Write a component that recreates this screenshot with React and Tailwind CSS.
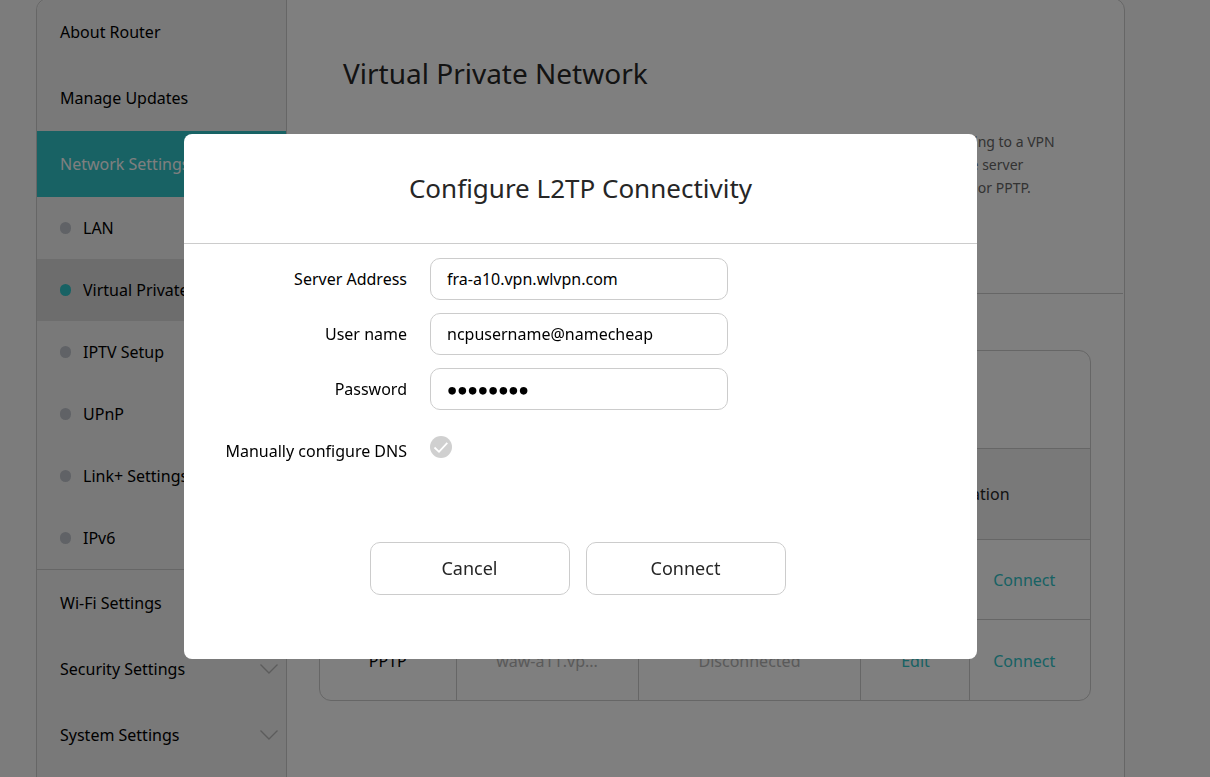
import React, { useState } from 'react';

const subItems = [
    { label: 'LAN' },
    { label: 'Virtual Private Network', active: true },
    { label: 'IPTV Setup' },
    { label: 'UPnP' },
    { label: 'Link+ Settings' },
    { label: 'IPv6' }
];

const connections = [
    { type: 'L2TP', server: 'fra-a10.vp...', status: 'Disconnected' },
    { type: 'PPTP', server: 'waw-a11.vp...', status: 'Disconnected' }
];

export default function App() {
    const [open, setOpen] = useState(true);

    return (
        <div className="h-screen overflow-hidden bg-[#f9f9f9] pr-[49px] font-['Noto_Sans',sans-serif] text-base text-black">
            <div className="mx-9 -mt-0.5 flex min-h-[calc(100vh+40px)] rounded-xl border border-[#ccc] bg-white">
                <Sidebar />
                <VpnPage onConnect={() => setOpen(true)} />
            </div>
            {open && <ConfigureDialog onClose={() => setOpen(false)} />}
        </div>
    );
}

function Sidebar() {
    return (
        <nav className="w-[250px] shrink-0 rounded-l-xl border-r border-[#ccc] bg-[#f3f3f3]">
            <MenuItem label="About Router" />
            <MenuItem label="Manage Updates" />
            <MenuItem label="Network Settings" active />
            <ul className="border-b border-[#ccc]">
                {subItems.map(item => (
                    <li key={item.label}>
                        <a
                            href="#"
                            className={`flex h-[62px] items-center gap-3 pl-[23px] whitespace-nowrap ${item.active ? 'bg-[#dbdbdb]' : ''}`}
                        >
                            <span className={`h-3 w-[11px] shrink-0 rounded-full ${item.active ? 'bg-[#30c4c8]' : 'bg-[#c0c4cc]'}`} />
                            <span className="overflow-hidden text-ellipsis">{item.label}</span>
                        </a>
                    </li>
                ))}
            </ul>
            <MenuItem label="Wi-Fi Settings" />
            <MenuItem label="Security Settings" arrow />
            <MenuItem label="System Settings" arrow />
        </nav>
    );
}

function MenuItem({ label, active, arrow }) {
    return (
        <a
            href="#"
            className={`flex h-[66px] items-center justify-between pr-2 pl-[23px] ${active ? 'bg-[#30c4c8] text-white' : ''}`}
        >
            {label}
            {arrow && (
                <svg className="h-[10px] w-[18px]" viewBox="0 0 18 10" fill="none" stroke="#b8b8b8" strokeWidth="1.4">
                    <path d="M0.5 0.5 L9 9 L17.5 0.5" />
                </svg>
            )}
        </a>
    );
}

function VpnPage({ onConnect }) {
    return (
        <main className="min-w-0 grow">
            <section className="mr-px h-[295px] border-b border-[#ccc] px-14 pt-[53px]">
                <h1 className="text-[28px] leading-[42px] text-[#262626]">Virtual Private Network</h1>
                <p className="mt-9 text-sm leading-[23px] whitespace-nowrap text-[#666]">
                    A virtual private network keeps the traffic of all your connected home devices private by connecting to a VPN<br />
                    server. Before you start, make sure that you have both the address and the account details of the server<br />
                    which you want to use. The router can reach the server with one of two different protocols, L2TP or PPTP.
                </p>
            </section>

            {/* Connection list */}
            <div className="mr-[33px] ml-8 mt-14 overflow-hidden rounded-xl border border-[#ccc]">
                <h2 className="flex h-[98px] items-center border-b border-[#ccc] px-6">VPN Connections</h2>
                <table className="w-full table-fixed text-center">
                    <colgroup>
                        <col className="w-[136px]" />
                        <col className="w-[182px]" />
                        <col />
                        <col className="w-[109px]" />
                        <col className="w-[120px]" />
                    </colgroup>
                    <thead>
                        <tr className="h-[90px] border-b border-[#ccc] bg-[#f3f3f3] text-[#262626]">
                            <th className="font-normal">Type</th>
                            <th className="font-normal">Server</th>
                            <th className="font-normal">Status</th>
                            <th className="pr-2 font-normal" colSpan={2}>Operation</th>
                        </tr>
                    </thead>
                    <tbody className="divide-y divide-[#ccc]">
                        {connections.map(item => (
                            <tr key={item.type} className="h-20 divide-x divide-[#ccc] last:h-[81px]">
                                <td className="pt-0.5">{item.type}</td>
                                <td className="pt-0.5 text-[#b4b4b4]">{item.server}</td>
                                <td className="pt-0.5 text-[#b4b4b4]">{item.status}</td>
                                <td className="pt-0.5"><button className="text-[#30c4c8]">Edit</button></td>
                                <td className="pt-0.5"><button className="pr-3 text-[#30c4c8]" onClick={onConnect}>Connect</button></td>
                            </tr>
                        ))}
                    </tbody>
                </table>
            </div>
        </main>
    );
}

function ConfigureDialog({ onClose }) {
    return (
        <div className="fixed inset-0 flex items-start justify-center bg-black/50 pt-[134px] pr-[49px]">
            <form
                role="dialog"
                aria-labelledby="dialog-title"
                className="w-[793px] rounded-lg bg-white pb-16"
                onSubmit={e => e.preventDefault()}
            >
                <h2 id="dialog-title" className="border-b border-[#ccc] py-9 text-center text-[26px] leading-[37px] text-[#262626]">
                    Configure L2TP Connectivity
                </h2>

                <div className="mt-[14px] grid grid-cols-[223px_298px] items-center gap-x-[23px] gap-y-[13px]">
                    <Field id="server" label="Server Address" value="fra-a10.vpn.wlvpn.com" />
                    <Field id="user" label="User name" value="ncpusername@namecheap" />
                    <Field id="password" label="Password" type="password" value="password" />
                    <label htmlFor="dns" className="pt-4 text-right">Manually configure DNS</label>
                    <div className="relative mt-2 size-[22px]">
                        <input id="dns" type="checkbox" className="block size-[22px] appearance-none rounded-full bg-[#d0d0d0] checked:bg-[#30c4c8]" />
                        <svg className="pointer-events-none absolute inset-0" viewBox="0 0 22 22" fill="none" stroke="#fff" strokeWidth="1.8">
                            <path d="M4.5 11.5 L9 15.8 L17.3 6.8" />
                        </svg>
                    </div>
                </div>

                <div className="mt-[79px] flex justify-center gap-4 pr-1.5">
                    <DialogButton label="Cancel" onClick={onClose} />
                    <DialogButton label="Connect" />
                </div>
            </form>
        </div>
    );
}

function Field({ id, label, type = 'text', value }) {
    return (
        <>
            <label htmlFor={id} className="text-right">{label}</label>
            <input
                id={id}
                type={type}
                defaultValue={value}
                className={`h-[42px] w-full rounded-[10px] border border-[#ccc] px-4 outline-none ${type === 'password' ? "pt-1 font-['DejaVu_Sans',sans-serif] font-bold [-webkit-text-stroke:2px_black]" : ''}`}
            />
        </>
    );
}

function DialogButton({ label, onClick }) {
    return (
        <button
            type="button"
            onClick={onClick}
            className="h-[53px] w-[200px] rounded-[10px] border border-[#ccc] pb-0.5 text-lg text-[#262626]"
        >
            {label}
        </button>
    );
}
